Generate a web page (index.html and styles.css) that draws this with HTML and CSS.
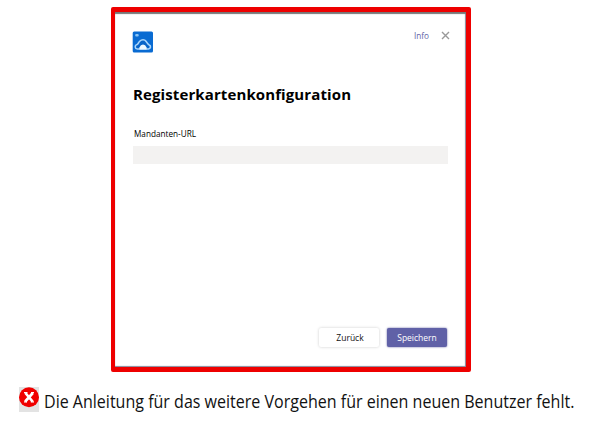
FILE: index.html
```html
<!DOCTYPE html>
<html lang="de">
<head>
<meta charset="utf-8">
<title>Registerkartenkonfiguration</title>
<link rel="stylesheet" href="styles.css">
</head>
<body>
<main class="dialog">
  <header class="top">
    <svg class="logo" viewBox="0 0 22 22" aria-hidden="true">
      <rect x=".7" y=".5" width="20.3" height="21" rx="1.5" fill="#096bd2"/>
      <rect x="3.2" y="3" width="3.5" height="2.5" rx="1" fill="#8ac4f4"/>
      <path d="M5.4 18C2.7 17.8 2.4 14.3 5 13.6C6 13.2 6.5 11.5 7.7 10.3C9.7 8.3 12.5 8.3 14.2 10.5C15 11.6 15.7 13.2 16.9 13.7C19.5 14.7 18.7 17.8 16.4 18Z" fill="#0864c8" stroke="#a9d5fa" stroke-width="1.6"/>
      <path d="M7.4 18.5V16.5Q8.5 13.6 11 13.6Q13.5 13.6 14.6 16.5V18.5Z" fill="#eef8ff"/>
    </svg>
    <nav class="actions">
      <a class="info">Info</a>
      <svg class="close" viewBox="0 0 9 9" aria-label="Schließen"><path d="M1 1L8 8M8 1L1 8" stroke="#999" stroke-width="1.4"/></svg>
    </nav>
  </header>
  <h1 class="title">Registerkartenkonfiguration</h1>
  <label class="label">Mandanten-URL</label>
  <div class="field"></div>
  <footer class="buttons">
    <button class="button"><span>Zurück</span></button>
    <button class="button primary"><span>Speichern</span></button>
  </footer>
</main>
<div class="note">
  <svg class="error" viewBox="0 0 20 25" aria-hidden="true">
    <rect width="20" height="25" fill="#e3e3e3"/>
    <circle cx="10" cy="10.2" r="10" fill="#f00000"/>
    <path d="M6.4 6L13.6 14.5M13.8 6L6.2 14.5" stroke="#fff" stroke-width="2.7"/>
    <path d="M5 5.7H8.5M12 5.7H15M5 14.8H8M11.8 14.8H15" stroke="#fff" stroke-width="1.2"/>
  </svg>
  <p class="message">Die Anleitung für das weitere Vorgehen für einen neuen Benutzer fehlt.</p>
</div>
</body>
</html>
```
FILE: styles.css
```css
* { box-sizing: border-box; }
body {
  margin: 0;
  padding-top: 7px;
  background: #fff;
  color: #000;
  font-family: "Open Sans", "Noto Sans", sans-serif;
  overflow: hidden;
}
.dialog {
  display: flex;
  flex-direction: column;
  width: 360px;
  height: 365px;
  margin-left: 111px;
  padding: 19px 19px 20px 18px;
  border: 5px solid #ee0000;
  border-left-width: 4px;
  border-radius: 2px;
  box-shadow: inset 0 2px 1px #777, inset -1px -1px 1px #889;
}
.top { display: flex; justify-content: space-between; height: 22px; }
.logo { width: 22px; height: 22px; margin-left: -1px; }
.actions { display: flex; gap: 12px; margin-right: -3px; }
.info { font-size: 8.2px; line-height: 10px; color: #6264a7; }
.close { width: 9px; height: 9px; }
.title {
  margin: 31px 0 0;
  font-size: 15px;
  font-weight: 700;
  line-height: 20px;
  letter-spacing: 0.11px;
  white-space: nowrap;
}
.label { margin-top: 24px; padding-left: 1px; font-size: 8.2px; line-height: 12px; }
.field { width: 315px; height: 18px; margin-top: 6px; background: #f3f2f1; }
.buttons { display: flex; justify-content: flex-end; gap: 8px; margin-top: auto; }
.button {
  width: 60px;
  height: 19px;
  padding: 0 0 0 2px;
  border: 0;
  border-radius: 2px;
  background: #fff;
  box-shadow: 0 0 3px #ccc;
  color: #111;
  font-family: inherit;
  font-size: 8.5px;
  line-height: 19px;
}
.primary { padding-left: 0; background: #6061a7; box-shadow: 0 0 2px #55569a; color: #fff; }
.note { display: flex; margin: 15px 0 0 19px; gap: 5px; }
.error { flex: none; width: 20px; height: 25px; }
.message {
  margin: 0;
  color: #111;
  font-size: 17.5px;
  line-height: 28px;
  white-space: nowrap;
  transform: scaleX(0.916);
  transform-origin: left;
}
```
